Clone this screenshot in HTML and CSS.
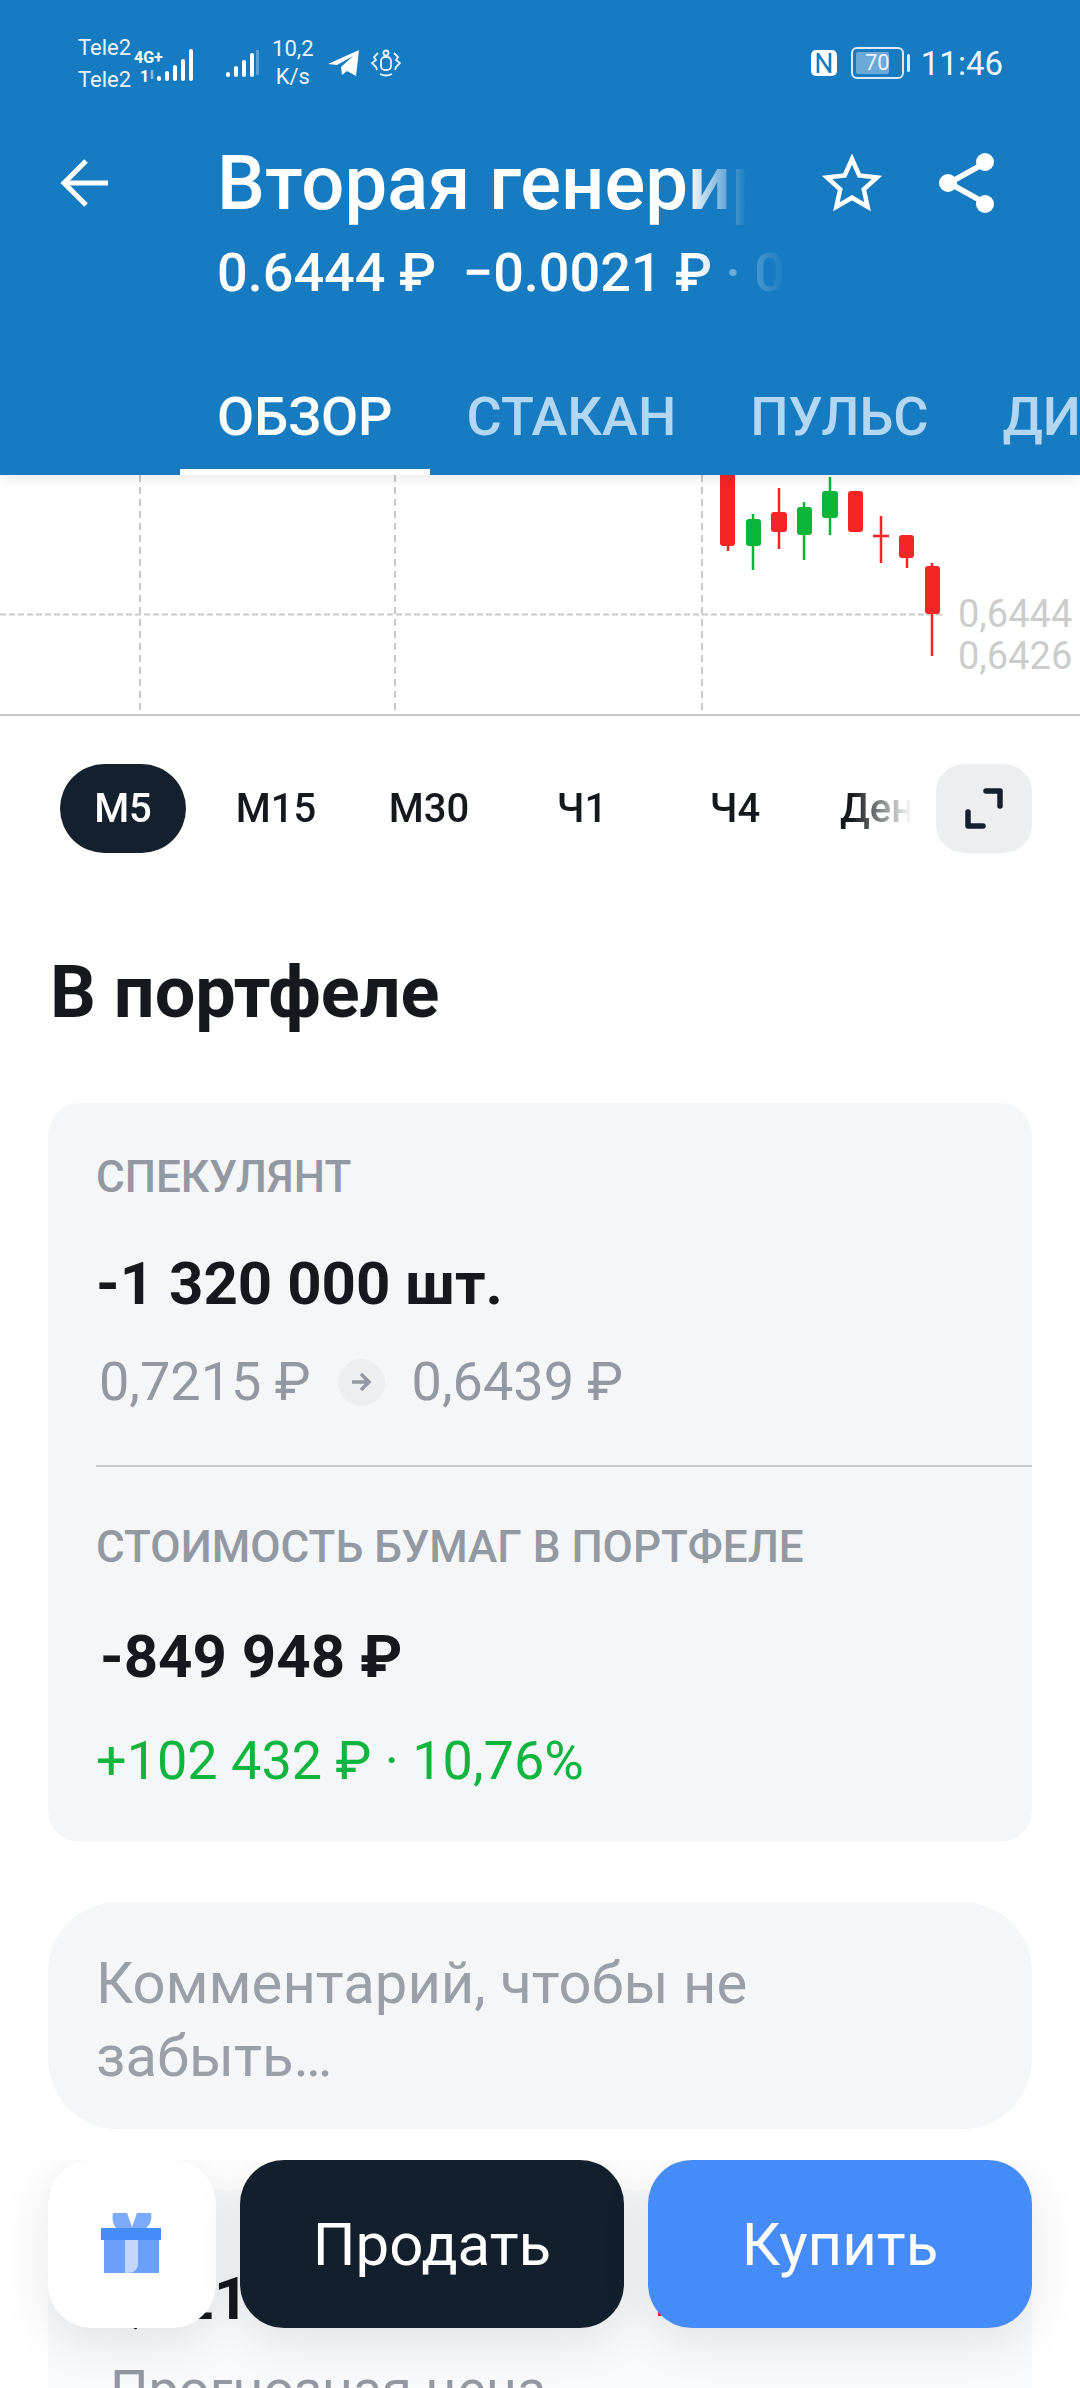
FILE: index.html
```html
<!DOCTYPE html>
<html lang="ru">
<head>
    <meta charset="UTF-8">
    <meta name="viewport" content="width=device-width, initial-scale=1.0">
    <title>Вторая генерирующая компания</title>
    <link rel="stylesheet" href="styles.css">
</head>
<body>
<div class="page">

    <header class="top">
        <div class="status">
            <div class="carriers"><span>Tele2</span><span>Tele2</span></div>
            <svg class="sig-a" width="66" height="40" viewBox="0 0 66 40">
                <text x="0" y="20" class="net">4G+</text>
                <text x="6" y="39" class="net">1</text>
                <path d="M18 27v9" stroke="#8dbde0" stroke-width="2.5"/>
                <g stroke="#fff" stroke-width="4" stroke-linecap="round">
                    <path d="M26 35v1M34 30v6M42 24v12M50 18v18M58 8v28" transform="translate(-1 0)"/>
                </g>
            </svg>
            <svg class="sig-b" width="34" height="32" viewBox="0 0 34 32">
                <g stroke="#fff" stroke-width="4" stroke-linecap="round">
                    <path d="M3 27v1M11 21v7M19 15v13M27 8v20"/>
                </g>
                <path d="M33 3v25" stroke="#5a9fd6" stroke-width="4"/>
            </svg>
            <div class="speed"><span>10,2</span><span>K/s</span></div>
            <svg class="tg" width="32" height="28" viewBox="0 0 32 28">
                <path d="M0 15 31 1l-3 26-9-5-5 4-1-8 12-11-16 9z" fill="#fff"/>
            </svg>
            <svg class="emblem" width="30" height="28" viewBox="0 0 30 28" fill="none" stroke="#e8f2fa" stroke-width="1.8">
                <circle cx="15" cy="4" r="2.5"/>
                <rect x="10" y="8" width="10" height="13" rx="4"/>
                <path d="M9 25q6 3 12 0M7 4 3 8l2 3-4 3 4 4 1 3M23 4l4 4-2 3 4 3-4 4-1 3"/>
            </svg>
            <div class="status-right">
                <svg width="28" height="28" viewBox="0 0 28 28">
                    <rect x="1" y="1" width="26" height="26" rx="5" fill="#fff"/>
                    <path d="M8 4v20M8 5l12 18M20 4v20" stroke="#167bc0" stroke-width="2.6" fill="none"/>
                </svg>
                <div class="battery"><div class="battery-fill"></div><span>70</span></div>
                <div class="battery-cap"></div>
                <div class="clock">11:46</div>
            </div>
        </div>

        <div class="title-row">
            <svg class="back" width="50" height="50" viewBox="0 0 50 50" fill="none" stroke="#fff" stroke-width="5">
                <path d="M48 25H4M26 3 4 25l22 22"/>
            </svg>
            <div class="title-text">Вторая генерирующая компания</div>
            <svg class="star" width="60" height="58" viewBox="0 0 60 58" fill="none" stroke="#fff" stroke-width="4.5">
                <path d="M30 5l7.300 16.500 17.700 2-13.200 11.700 3.800 17.600L30 43.700 14.400 52.800l3.800-17.600L5 23.500l17.700-2z"/>
            </svg>
            <svg class="share" width="56" height="62" viewBox="0 0 56 62" fill="none" stroke="#fff" stroke-width="5.500">
                <path d="M46 11 10 31l36 20"/>
                <g fill="#fff" stroke="none">
                    <circle cx="46" cy="10" r="9"/>
                    <circle cx="9" cy="31" r="9"/>
                    <circle cx="46" cy="52" r="9"/>
                </g>
            </svg>
        </div>

        <div class="quote">0.6444 ₽&nbsp; −0.0021 ₽ <i>· 0.33%</i></div>

        <nav class="tabs">
            <a class="tab active">ОБЗОР</a>
            <a class="tab">СТАКАН</a>
            <a class="tab">ПУЛЬС</a>
            <a class="tab">ДИВИДЕНДЫ</a>
        </nav>
    </header>

    <svg class="chart" width="1080" height="241" viewBox="0 475 1080 241">
        <g stroke="#c9c9c9" stroke-width="2" stroke-dasharray="7 5">
            <path d="M140 475v240M395 475v240M702 475v240"/>
            <path d="M0 614.500h942" stroke-dasharray="6 3"/>
        </g>
        <path d="M0 715h1080" stroke="#c8c8c8" stroke-width="2"/>

        <!-- свечи -->
        <g stroke="#f42525" stroke-width="2.500" fill="#f42525">
            <path d="M728 540v11M779 488v61M881 516v47M907 550v18M932 563v93M873 536h16"/>
        </g>
        <g stroke="#0ab53a" stroke-width="2.500">
            <path d="M753 514v56M804 502v58M830 477v58"/>
        </g>
        <g fill="#f42525">
            <rect x="720" y="470" width="15" height="76" rx="3"/>
            <rect x="771" y="512" width="16" height="20" rx="3"/>
            <rect x="848" y="491" width="15" height="41" rx="3"/>
            <rect x="899" y="535" width="15" height="23" rx="3"/>
            <rect x="925" y="566" width="15" height="48" rx="3"/>
        </g>
        <g fill="#0ab53a">
            <rect x="746" y="519" width="15" height="27" rx="3"/>
            <rect x="797" y="507" width="15" height="28" rx="3"/>
            <rect x="822" y="491" width="16" height="27" rx="3"/>
        </g>

        <text x="958" y="627" class="axis">0,6444</text>
        <text x="958" y="669" class="axis">0,6426</text>
    </svg>

    <div class="periods">
        <div class="period-list">
            <div class="period active">М5</div>
            <div class="period">М15</div>
            <div class="period">М30</div>
            <div class="period">Ч1</div>
            <div class="period">Ч4</div>
            <div class="period">День</div>
        </div>
        <div class="expand">
            <svg width="44" height="44" viewBox="0 0 44 44" fill="none" stroke="#14202e" stroke-width="5.500" stroke-linecap="round" stroke-linejoin="round">
                <path d="M24 4h14v15M6 25v14h15"/>
            </svg>
        </div>
    </div>

    <h2 class="section-title">В портфеле</h2>

    <section class="card">
        <div class="card-label">СПЕКУЛЯНТ</div>
        <div class="amount">-1 320 000 шт.</div>
        <div class="prices">
            <span>0,7215 ₽</span>
            <span class="arrow-dot">
                <svg width="22" height="20" viewBox="0 0 22 20" fill="none" stroke="#9299a2" stroke-width="3.500">
                    <path d="M2 10h17M11 2l8 8-8 8"/>
                </svg>
            </span>
            <span>0,6439 ₽</span>
        </div>
        <div class="divider"></div>
        <div class="card-label second">СТОИМОСТЬ БУМАГ В ПОРТФЕЛЕ</div>
        <div class="amount value">-849 948 ₽</div>
        <div class="profit">+102 432 ₽ · 10,76%</div>
    </section>

    <div class="comment">Комментарий, чтобы не забыть…</div>

    <section class="card forecast">
        <div class="forecast-top">
            <span class="forecast-price">0,721 ₽</span>
            <span class="forecast-mark"></span>
        </div>
        <div class="forecast-label">Прогнозная цена</div>
    </section>

    <div class="actions">
        <div class="btn gift">
            <svg width="62" height="62" viewBox="0 0 62 62">
                <path d="M12 0h14l5 14 5-14h14q2 10-6 16H16Q10 10 12 0z" fill="#7eaafb"/>
                <path d="M3 26h55v34q0 0-14 0H3z" fill="#6a9ffa"/>
                <path d="M24 26h13v24q0 10-11 10h-2z" fill="#c2d6fc"/>
                <rect x="0" y="15" width="60" height="12" fill="#468cf8"/>
            </svg>
        </div>
        <div class="btn sell">Продать</div>
        <div class="btn buy">Купить</div>
    </div>

</div>
</body>
</html>
```

FILE: styles.css
```css
html, body {
    margin: 0;
    padding: 0;
    background-color: #ffffff;
}
.page {
    position: relative;
    width: 1080px;
    height: 2388px;
    overflow: hidden;
    font-family: Roboto, "Noto Sans", sans-serif;
    color: #15181c;
    background-color: #ffffff;
}

/* шапка */
.top {
    position: relative;
    z-index: 2;
    height: 475px;
    background-color: #167bc0;
    color: #ffffff;
    box-shadow: 0 4px 14px rgba(0, 0, 0, 0.08);
}
.status {
    display: flex;
    align-items: center;
    height: 126px;
    padding: 0 77px 0 78px;
    box-sizing: border-box;
}
.carriers {
    display: flex;
    flex-direction: column;
    gap: 9px;
    font-size: 22px;
    line-height: 23px;
    color: #eaf4fb;
}
.sig-a {
    margin-left: 3px;
}
.sig-a .net {
    font-size: 16px;
    font-weight: 700;
    fill: #ffffff;
}
.sig-b {
    margin-left: 25px;
}
.speed {
    display: flex;
    flex-direction: column;
    align-items: center;
    margin-left: 13px;
    font-size: 22px;
    line-height: 28px;
    color: #eaf4fb;
}
.tg {
    margin-left: 14px;
}
.emblem {
    margin-left: 11px;
}
.status-right {
    display: flex;
    align-items: center;
    margin-left: auto;
}
.battery {
    position: relative;
    width: 53px;
    height: 32px;
    margin-left: 13px;
    border: 2px solid #d9ebf7;
    border-radius: 6px;
    box-sizing: border-box;
    font-size: 22px;
    line-height: 28px;
    text-align: center;
    color: #eaf4fb;
}
.battery-fill {
    position: absolute;
    left: 3px;
    top: 3px;
    bottom: 3px;
    width: 33px;
    border-radius: 2px;
    background-color: #6aa9d9;
}
.battery span {
    position: relative;
}
.battery-cap {
    width: 3px;
    height: 18px;
    margin-left: 3px;
    border-radius: 2px;
    background-color: #d9ebf7;
}
.clock {
    margin-left: 11px;
    font-size: 33px;
    color: #eef6fc;
}

.title-row {
    display: flex;
    align-items: center;
    height: 114px;
    padding-left: 60px;
    position: relative;
}
.title-text {
    width: 535px;
    margin-left: 107px;
    font-size: 76px;
    font-weight: 500;
    line-height: 90px;
    white-space: nowrap;
    overflow: hidden;
    -webkit-mask-image: linear-gradient(to right, #000 88%, transparent 99%);
    mask-image: linear-gradient(to right, #000 88%, transparent 99%);
}
.star {
    margin-left: 70px;
}
.share {
    margin-left: 57px;
}
.quote {
    width: 570px;
    margin-left: 217px;
    margin-top: 0;
    height: 66px;
    font-size: 54px;
    font-weight: 500;
    line-height: 66px;
    white-space: nowrap;
    overflow: hidden;
    -webkit-mask-image: linear-gradient(to right, #000 84%, rgba(0, 0, 0, 0.3) 95%, transparent 100%);
    mask-image: linear-gradient(to right, #000 84%, rgba(0, 0, 0, 0.3) 95%, transparent 100%);
}
.quote i {
    font-style: normal;
    color: #a9cfeb;
}
.tabs {
    display: flex;
    height: 97px;
    margin-top: 72px;
    padding-left: 180px;
    white-space: nowrap;
    overflow: hidden;
    box-sizing: border-box;
    margin-top: 72px;
}
.tab {
    flex-shrink: 0;
    height: 97px;
    padding: 0 37px;
    box-sizing: border-box;
    font-size: 54px;
    font-weight: 500;
    line-height: 78px;
    color: #b3d6f2;
}
.tab.active {
    color: #ffffff;
    border-bottom: 6px solid #ffffff;
}

/* график */
.chart {
    display: block;
}
.axis {
    font-size: 38px;
    fill: #cccccc;
}

.periods {
    display: flex;
    padding: 48px 48px 0 60px;
}
.period-list {
    display: flex;
    gap: 27px;
    width: 852px;
    overflow: hidden;
    -webkit-mask-image: linear-gradient(to right, #000 93%, transparent 100%);
    mask-image: linear-gradient(to right, #000 93%, transparent 100%);
}
.period {
    flex-shrink: 0;
    width: 126px;
    height: 89px;
    border-radius: 45px;
    font-size: 40px;
    font-weight: 500;
    line-height: 89px;
    text-align: center;
    white-space: nowrap;
}
.period.active {
    background-color: #14202e;
    color: #ffffff;
}
.expand {
    display: flex;
    align-items: center;
    justify-content: center;
    width: 96px;
    height: 89px;
    margin-left: 24px;
    border-radius: 28px;
    background-color: #eceef0;
}

.section-title {
    margin: 100px 0 0 50px;
    font-size: 72px;
    font-weight: 700;
    line-height: 80px;
}

/* карточки */
.card {
    margin: 70px 48px 0;
    padding: 49px 0 51px 48px;
    border-radius: 32px;
    background-color: #f5f6f8;
}
.card-label {
    font-size: 44px;
    font-weight: 500;
    line-height: 50px;
    color: #9299a2;
}
.card-label.second {
    margin-top: 55px;
}
.amount {
    margin-top: 47px;
    font-size: 60px;
    font-weight: 700;
    line-height: 70px;
}
.amount.value {
    margin-top: 50px;
    margin-left: 4px;
}
.prices {
    display: flex;
    align-items: center;
    margin-top: 33px;
    margin-left: 3px;
    font-size: 54px;
    line-height: 60px;
    color: #9299a2;
}
.arrow-dot {
    display: flex;
    align-items: center;
    justify-content: center;
    width: 47px;
    height: 47px;
    margin: 0 27px;
    border-radius: 50%;
    background-color: #eceef0;
}
.divider {
    height: 2px;
    margin-top: 53px;
    background-color: #c8cbd0;
}
.profit {
    margin-top: 39px;
    font-size: 54px;
    line-height: 60px;
    color: #0fb53f;
}
.comment {
    display: flex;
    align-items: center;
    height: 227px;
    margin: 60px 48px 0;
    padding: 9px 240px 0 48px;
    border-radius: 70px;
    box-sizing: border-box;
    background-color: #f5f6f8;
    font-size: 58px;
    line-height: 73px;
    color: #9aa0a8;
}
.forecast {
    margin-top: 61px;
    padding: 74px 0 0 62px;
    height: 300px;
    background-color: #f9fafb;
    border-radius: 0;
    box-sizing: border-box;
}
.forecast-top {
    display: flex;
    align-items: flex-start;
    height: 70px;
    margin-left: -14px;
}
.forecast-price {
    width: 562px;
    font-size: 60px;
    font-weight: 700;
    line-height: 70px;
}
.forecast-mark {
    width: 50px;
    height: 44px;
    margin-top: 8px;
    background-color: #e0272c;
}
.forecast-label {
    margin-top: 26px;
    font-size: 54px;
    line-height: 60px;
    color: #9299a2;
}

/* кнопки поверх страницы */
.actions {
    position: absolute;
    left: 0;
    right: 0;
    top: 2160px;
    bottom: 0;
    z-index: 3;
    display: flex;
    align-items: flex-start;
    gap: 24px;
    padding: 0 48px;
    overflow: hidden;
}
.btn {
    display: flex;
    align-items: center;
    justify-content: center;
    flex: 1;
    height: 168px;
    border-radius: 44px;
    font-size: 60px;
    color: #ffffff;
    box-shadow: 0 12px 50px rgba(0, 0, 0, 0.1);
}
.gift {
    flex: none;
    width: 168px;
    background-color: #ffffff;
}
.sell {
    background-color: #141f2d;
}
.buy {
    background-color: #468cf8;
}
```
